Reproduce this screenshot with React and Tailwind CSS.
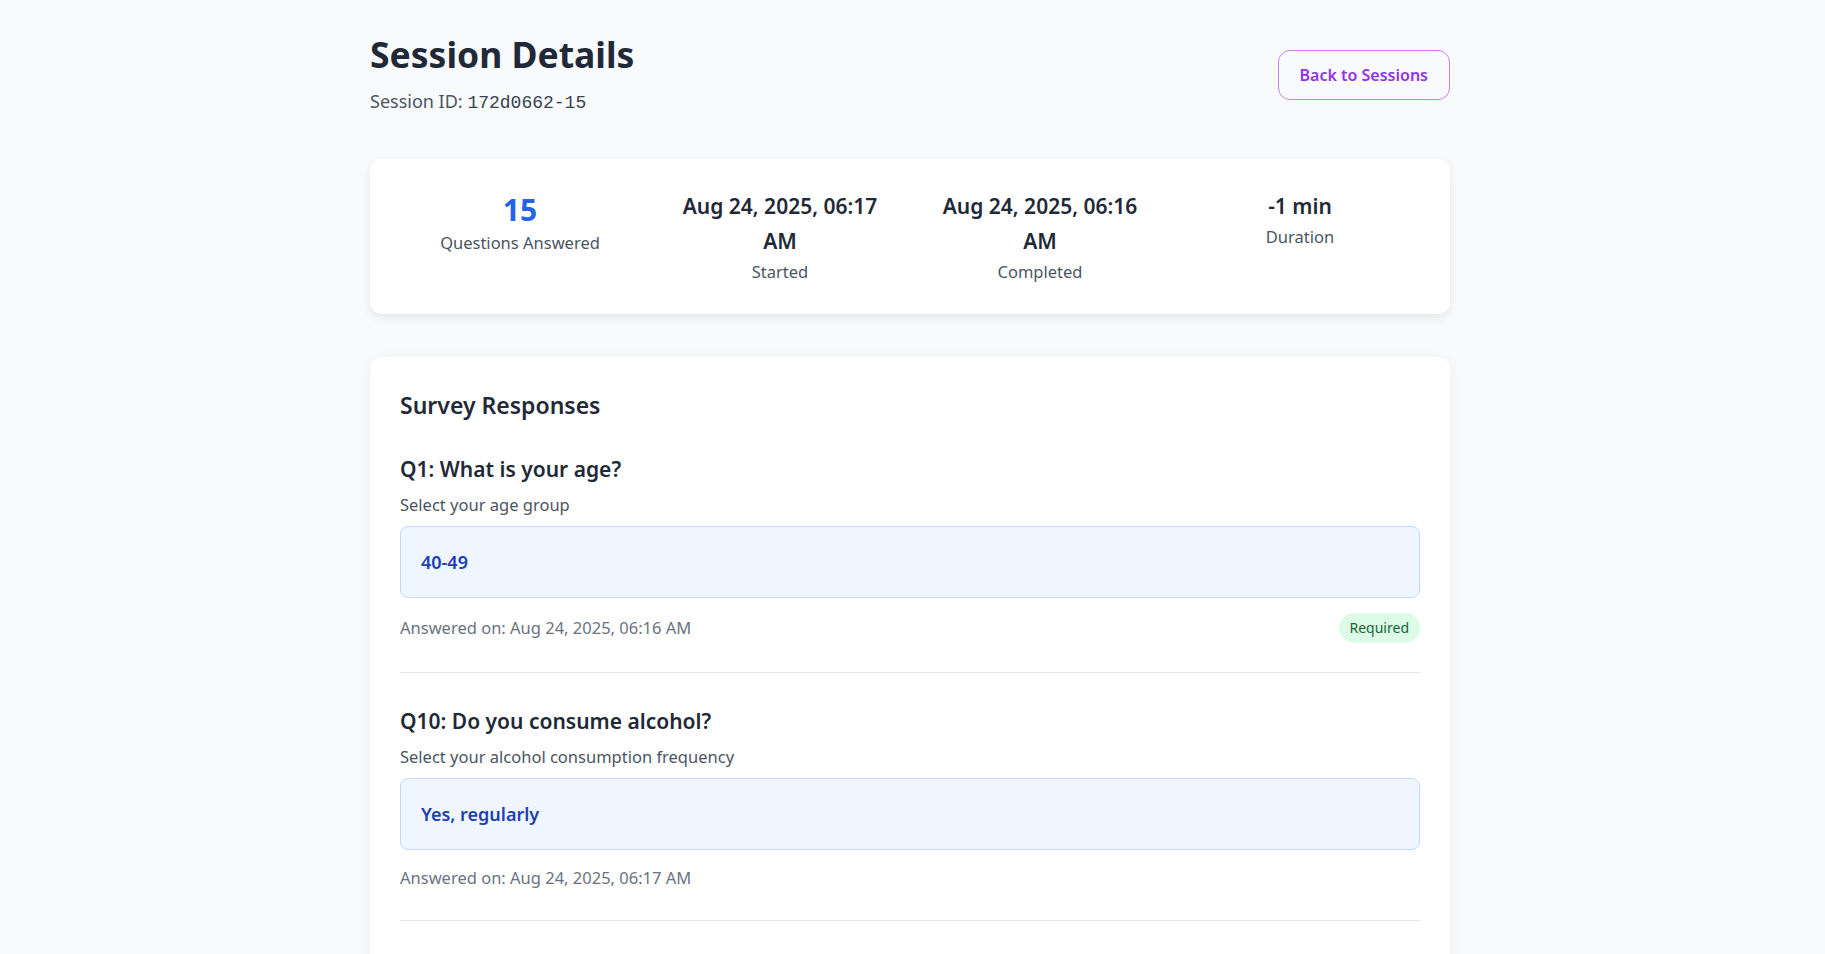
import React from 'react';

const stats = [
  { value: '15', label: 'Questions Answered', big: true },
  { value: 'Aug 24, 2025, 06:17 AM', label: 'Started' },
  { value: 'Aug 24, 2025, 06:16 AM', label: 'Completed' },
  { value: '-1 min', label: 'Duration' },
];

const responses = [
  {
    id: 'Q1',
    question: 'What is your age?',
    hint: 'Select your age group',
    answer: '40-49',
    answeredOn: 'Aug 24, 2025, 06:16 AM',
    required: true,
  },
  {
    id: 'Q10',
    question: 'Do you consume alcohol?',
    hint: 'Select your alcohol consumption frequency',
    answer: 'Yes, regularly',
    answeredOn: 'Aug 24, 2025, 06:17 AM',
    required: false,
  },
  {
    id: 'Q11',
    question: 'How often do you exercise?',
    hint: 'Select your weekly exercise frequency',
    answer: '1-2 times a week',
    answeredOn: 'Aug 24, 2025, 06:17 AM',
    required: true,
  },
];

const App = () => {
  return (
    <div className="min-h-screen bg-[#f9fafb] pr-[5px] font-['Noto_Sans',sans-serif] leading-[1.6] text-[#1f2937]">
      <div className="max-w-[1080px] mx-auto pt-[33px] pb-10">
        {/* Header */}
        <div className="flex items-center justify-between mb-[42px]">
          <div>
            <h1 className="text-[35.5px] font-bold leading-[42px] text-[#1f2937] mb-[12px]">Session Details</h1>
            <p className="text-[18px] leading-[28px] text-[#4b5563]">
              Session ID: <code className="font-['Liberation_Mono',monospace] text-[18px] text-[#374151]">172d0662-15</code>
            </p>
          </div>
          <button className="border border-[#c084fc] text-[#9333ea] rounded-xl px-[21px] py-3 text-[16px] font-semibold leading-6 bg-transparent">
            Back to Sessions
          </button>
        </div>

        {/* Stats */}
        <div className="bg-white rounded-xl shadow-[0_4px_10px_rgba(0,0,0,0.08)] pt-[30px] pb-[29px] px-[30px] grid grid-cols-4 gap-5 text-center mb-[43px]">
          {stats.map((s, i) => (
            <div key={i}>
              {s.big ? (
                <div className="text-[30px] font-bold text-[#2563eb] leading-[41px]">{s.value}</div>
              ) : (
                <div className="text-[21px] font-semibold text-[#1f2937] leading-[35px] px-4">{s.value}</div>
              )}
              <div className="text-[16.5px] leading-[26px] text-[#4b5563]">{s.label}</div>
            </div>
          ))}
        </div>

        {/* Responses */}
        <div className="bg-white rounded-xl shadow-[0_4px_16px_rgba(0,0,0,0.06)] p-[30px]">
          <h2 className="text-[23px] font-semibold leading-[36px] text-[#1f2937] mb-[29px]">Survey Responses</h2>
          {responses.map((r) => (
            <div key={r.id} className="border-b border-[#e5e7eb] pb-[29px] mb-[31px]">
              <h3 className="text-[21px] font-semibold leading-[34px] text-[#1f2937]">
                {r.id}: {r.question}
              </h3>
              <p className="text-[16.5px] leading-[26px] text-[#4b5563] mt-[6px] mb-[8px]">{r.hint}</p>
              <div className="bg-[#eff6ff] border border-[#bfdbfe] rounded-lg px-5 py-5 text-[18px] font-semibold text-[#1e40af] leading-[30px]">
                {r.answer}
              </div>
              <div className="flex items-center justify-between mt-[15px]">
                <span className="text-[16.5px] leading-[26px] text-[#6b7280]">Answered on: {r.answeredOn}</span>
                {r.required && (
                  <span className="bg-[#dcfce7] text-[#166534] text-[14px] rounded-full px-[11px] leading-[30px]">Required</span>
                )}
              </div>
            </div>
          ))}
        </div>
      </div>
    </div>
  );
};

export default App;
